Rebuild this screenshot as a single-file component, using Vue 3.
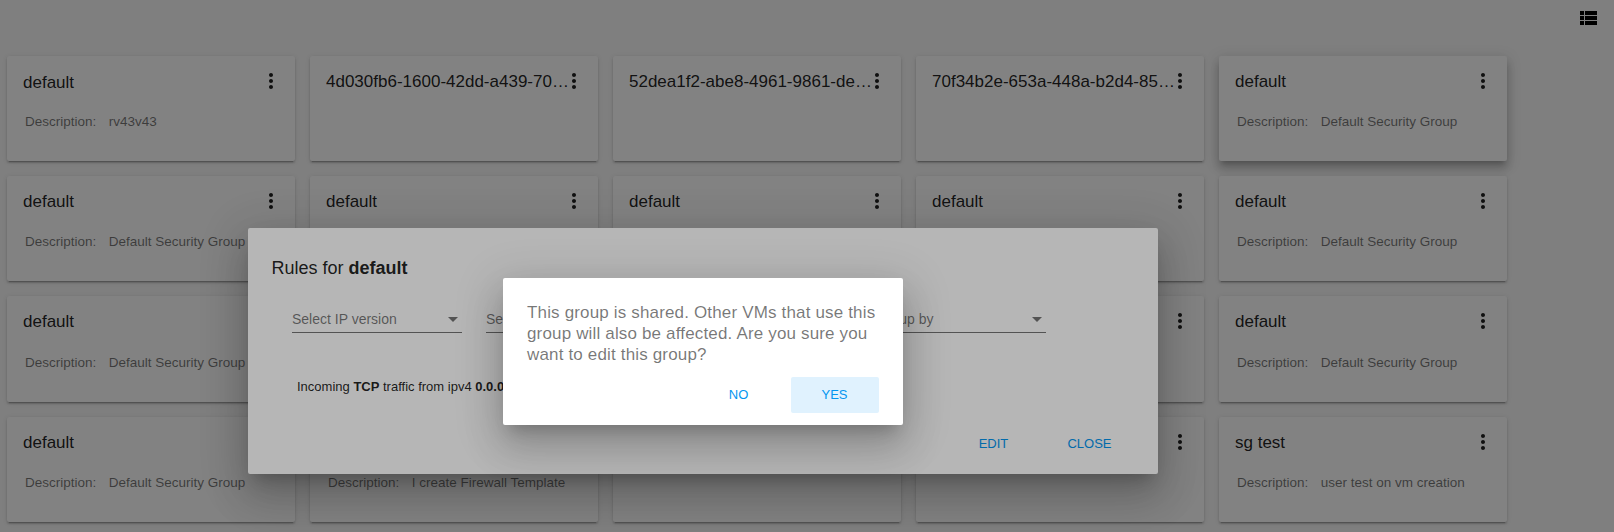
<script setup>
const dsg = 'Default Security Group'
const cards = [
  { name: 'default', description: 'rv43v43', lowered: true },
  { name: '4d030fb6-1600-42dd-a439-703c51d2a9e4' },
  { name: '52dea1f2-abe8-4961-9861-de70c4b1f386' },
  { name: '70f34b2e-653a-448a-b2d4-8597ab10ce42' },
  { name: 'default', description: dsg, raised: true },
  { name: 'default', description: dsg },
  { name: 'default' },
  { name: 'default' },
  { name: 'default' },
  { name: 'default', description: dsg },
  { name: 'default', description: dsg },
  { name: 'default' },
  { name: 'default' },
  { name: 'default' },
  { name: 'default', description: dsg },
  { name: 'default', description: dsg },
  { name: 'default', description: 'I create Firewall Template' },
  { name: 'default' },
  { name: 'default' },
  { name: 'sg test', description: 'user test on vm creation' },
]
const filters = ['Select IP version', 'Select types', 'Group by']
</script>

<template>
  <div class="page">
    <header class="toolbar">
      <svg class="list-icon" viewBox="0 0 17 14" width="17" height="14" shape-rendering="crispEdges">
        <path d="M0 0h4v4H0zM5 0h12v4H5zM0 5h4v4H0zM5 5h12v4H5zM0 10h4v4H0zM5 10h12v4H5z" />
      </svg>
    </header>

    <main class="grid">
      <article v-for="(card, i) in cards" :key="i" class="card" :class="{ raised: card.raised }">
        <div class="card-head">
          <h3 class="card-title" :class="{ lowered: card.lowered }">{{ card.name }}</h3>
          <svg class="more" viewBox="0 0 24 24" width="24" height="24">
            <path d="M12 8c1.1 0 2-.9 2-2s-.9-2-2-2-2 .9-2 2 .9 2 2 2zm0 2c-1.1 0-2 .9-2 2s.9 2 2 2 2-.9 2-2-.9-2-2-2zm0 6c-1.1 0-2 .9-2 2s.9 2 2 2 2-.9 2-2-.9-2-2-2z" />
          </svg>
        </div>
        <div v-if="card.description" class="card-body">
          <span class="label">Description:</span>
          <span class="value">{{ card.description }}</span>
        </div>
      </article>
    </main>

    <div class="overlay">
      <section class="dialog rules">
        <h2 class="dialog-title">Rules for <b>default</b></h2>
        <div class="filters">
          <div v-for="name in filters" :key="name" class="select">
            <span>{{ name }}</span>
            <i class="arrow"></i>
          </div>
        </div>
        <p class="rule">Incoming <b>TCP</b> traffic from ipv4 <b>0.0.0.0/0</b></p>
        <div class="actions">
          <button class="btn">EDIT</button>
          <button class="btn">CLOSE</button>
        </div>
      </section>
    </div>

    <div class="overlay">
      <section class="dialog confirm">
        <p class="message">This group is shared. Other VMs that use this group will also be affected. Are you sure you want to edit this group?</p>
        <div class="actions">
          <button class="btn">NO</button>
          <button class="btn focused">YES</button>
        </div>
      </section>
    </div>
  </div>
</template>

<style>
body {
  margin: 0;
  overflow: hidden;
}
</style>

<style scoped>
.page {
  position: relative;
  box-sizing: border-box;
  width: 1614px;
  height: 532px;
  overflow: hidden;
  background: #fafafa;
  font-family: "Liberation Sans", Arial, sans-serif;
  color: rgba(0, 0, 0, 0.87);
}
.toolbar {
  display: flex;
  justify-content: flex-end;
  box-sizing: border-box;
  height: 55.7px;
  padding: 11px 17px 0 0;
}
.list-icon {
  fill: #000;
}
.grid {
  display: grid;
  grid-template-columns: repeat(5, 288px);
  grid-auto-rows: 105.35px;
  gap: 15px;
  padding-left: 7px;
}
.card {
  box-sizing: border-box;
  padding: 13px 12px 0 16px;
  border-radius: 2px;
  background: #fff;
  box-shadow: 0 3px 1px -2px rgba(0, 0, 0, 0.2), 0 2px 2px 0 rgba(0, 0, 0, 0.14), 0 1px 5px 0 rgba(0, 0, 0, 0.12);
}
.card.raised {
  box-shadow: 0 5px 5px -3px rgba(0, 0, 0, 0.2), 0 8px 10px 1px rgba(0, 0, 0, 0.14), 0 3px 14px 2px rgba(0, 0, 0, 0.12);
}
.card-head {
  display: flex;
  height: 24px;
}
.card-title {
  width: 243px;
  margin: 0;
  padding-top: 1px;
  overflow: hidden;
  font-size: 17px;
  font-weight: 400;
  line-height: 24px;
  text-overflow: ellipsis;
  white-space: nowrap;
}
.card-title.lowered {
  padding-top: 2px;
}
.more {
  flex: none;
  margin-left: -7px;
  fill: rgba(0, 0, 0, 0.87);
}
.card-body {
  display: flex;
  gap: 12.5px;
  margin-top: 21.15px;
  padding-left: 2px;
  font-size: 13.5px;
  line-height: 16px;
  color: rgba(0, 0, 0, 0.54);
}
.overlay {
  position: absolute;
  inset: 0;
  background: rgba(0, 0, 0, 0.288);
}
.dialog {
  position: absolute;
  box-sizing: border-box;
  border-radius: 2px;
  background: #fff;
  box-shadow: 0 11px 15px -7px rgba(0, 0, 0, 0.2), 0 24px 38px 3px rgba(0, 0, 0, 0.14), 0 9px 46px 8px rgba(0, 0, 0, 0.12);
}
.rules {
  top: 228px;
  left: 248px;
  width: 910px;
  height: 246px;
  padding: 28px 24px 0;
}
.dialog-title {
  margin: 0 0 0 -0.5px;
  font-size: 18px;
  font-weight: 400;
  line-height: 24px;
}
.filters {
  display: flex;
  gap: 24px;
  margin: 31px 0 0 20px;
}
.select {
  display: flex;
  align-items: center;
  justify-content: space-between;
  box-sizing: border-box;
  width: 170px;
  height: 22px;
  padding: 0 4px 5px 0;
  border-bottom: 1px solid rgba(0, 0, 0, 0.54);
  font-size: 14px;
  line-height: 16px;
  color: rgba(0, 0, 0, 0.54);
}
.select:last-child {
  margin-left: 196px;
}
.arrow {
  border: 5px solid transparent;
  border-top-color: currentColor;
  border-bottom: 0;
}
.rule {
  margin: 46px 0 0 25px;
  font-size: 13px;
  line-height: 16px;
}
.actions {
  display: flex;
  justify-content: flex-end;
  gap: 8px;
}
.rules .actions {
  margin-top: 31px;
}
.btn {
  width: 88px;
  height: 36px;
  padding: 0 1px 0 0;
  border: 0;
  border-radius: 2px;
  background: none;
  font: 13px/36px "Liberation Sans", Arial, sans-serif;
  color: #0396f0;
}
.btn.focused {
  background: #e0f2fe;
}
.confirm {
  top: 278px;
  left: 503px;
  width: 400px;
  height: 147px;
  padding: 24px 24px 0;
}
.message {
  margin: 0 0 12px;
  font-size: 17px;
  letter-spacing: 0.16px;
  line-height: 21px;
  color: rgba(0, 0, 0, 0.54);
}
</style>
